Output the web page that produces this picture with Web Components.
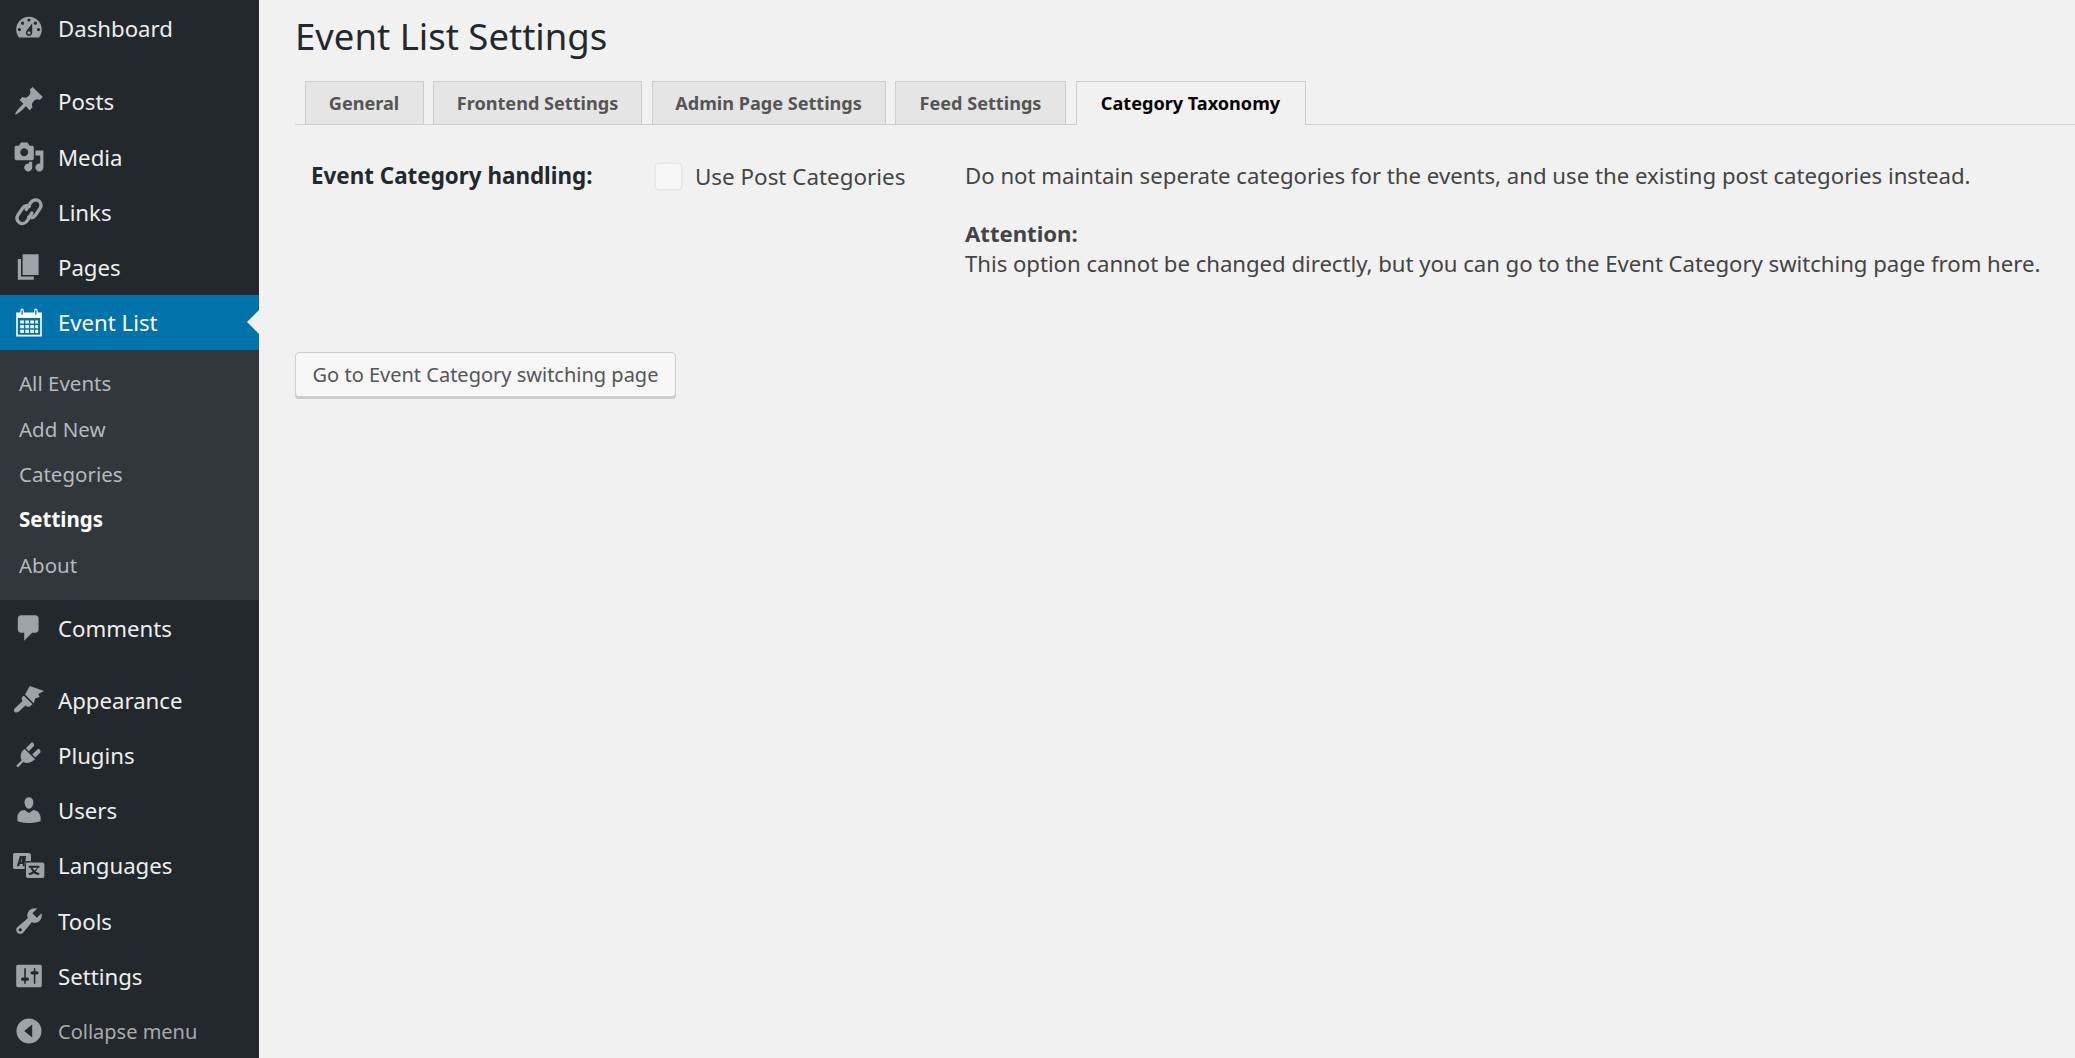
<!DOCTYPE html>
<html>
<head>
<meta charset="utf-8">
<title>Event List Settings</title>
<style>
  html, body { margin: 0; height: 100%; background: #f1f1f1; overflow: hidden; }
  body { font-family: "Noto Sans", "Open Sans", sans-serif; color: #444; }
  wp-shell { height: 1058px; }
</style>
</head>
<body>
<wp-shell>
  <wp-menu slot="menu">
    <wp-item icon="dashboard">Dashboard</wp-item>
    <wp-sep></wp-sep>
    <wp-item icon="pin">Posts</wp-item>
    <wp-item icon="media">Media</wp-item>
    <wp-item icon="link">Links</wp-item>
    <wp-item icon="pages">Pages</wp-item>
    <wp-item icon="calendar" current>Event List</wp-item>
    <wp-submenu>
      <wp-subitem>All Events</wp-subitem>
      <wp-subitem>Add New</wp-subitem>
      <wp-subitem>Categories</wp-subitem>
      <wp-subitem current>Settings</wp-subitem>
      <wp-subitem>About</wp-subitem>
    </wp-submenu>
    <wp-item icon="comment">Comments</wp-item>
    <wp-sep style="height:17.300px"></wp-sep>
    <wp-item icon="brush">Appearance</wp-item>
    <wp-item icon="plug">Plugins</wp-item>
    <wp-item icon="user">Users</wp-item>
    <wp-item icon="lang">Languages</wp-item>
    <wp-item icon="wrench">Tools</wp-item>
    <wp-item icon="sliders">Settings</wp-item>
    <wp-item icon="collapse" muted>Collapse menu</wp-item>
  </wp-menu>
  <h-title>Event List Settings</h-title>
  <wp-tabs>
    <wp-tab style="width:119px">General</wp-tab>
    <wp-tab style="width:209px">Frontend Settings</wp-tab>
    <wp-tab style="width:234px">Admin Page Settings</wp-tab>
    <wp-tab style="width:171px">Feed Settings</wp-tab>
    <wp-tab style="width:230px" active>Category Taxonomy</wp-tab>
  </wp-tabs>
  <wp-option label="Event Category handling:" check="Use Post Categories">
    <p>Do not maintain seperate categories for the events, and use the existing post categories instead.</p>
    <p><b>Attention:</b><br>This option cannot be changed directly, but you can go to the Event Category switching page from here.</p>
  </wp-option>
  <wp-button>Go to Event Category switching page</wp-button>
</wp-shell>
<script>
// ICON PATHS, ALL ON A 20x20 BOX
const ICONS = {
  dashboard: '<path fill-rule="evenodd" d="M3.760 16h12.480c1.100-1.370 1.760-3.110 1.760-5 0-4.420-3.580-8-8-8s-8 3.580-8 8c0 1.890.660 3.630 1.760 5zM10 4c.550 0 1 .450 1 1s-.450 1-1 1-1-.450-1-1 .450-1 1-1zM6 6c.550 0 1 .450 1 1s-.450 1-1 1-1-.450-1-1 .450-1 1-1zm8 0c.550 0 1 .450 1 1s-.450 1-1 1-1-.450-1-1 .450-1 1-1zm-5.370 5.550L12 7v6c0 1.100-.900 2-2 2s-2-.900-2-2c0-.570.240-1.080.630-1.450zM4 10c.550 0 1 .450 1 1s-.450 1-1 1-1-.450-1-1 .450-1 1-1zm12 0c.550 0 1 .450 1 1s-.450 1-1 1-1-.450-1-1 .450-1 1-1zm-5 3c0-.550-.450-1-1-1s-1 .450-1 1 .450 1 1 1 1-.450 1-1z"/>',
  pin: '<path d="M10.440 3.020l1.820-1.820 6.360 6.350-1.830 1.820c-1.050-.680-2.480-.570-3.410.360l-.750.750c-.920.930-1.040 2.350-.350 3.410l-1.830 1.820-2.410-2.410-2.800 2.790c-.420.420-3.380 2.710-3.800 2.290s1.860-3.390 2.280-3.810l2.790-2.790L4.100 9.360l1.830-1.820c1.050.690 2.480.570 3.400-.360l.750-.750c.930-.920 1.050-2.350.360-3.410z"/>',
  media: '<path fill-rule="evenodd" d="M13 11V4c0-.550-.450-1-1-1h-1.670L9 1H5L3.670 3H2c-.550 0-1 .450-1 1v7c0 .550.450 1 1 1h10c.550 0 1-.450 1-1zM7 4.500c1.380 0 2.500 1.120 2.500 2.500S8.380 9.500 7 9.500 4.500 8.380 4.500 7 5.620 4.500 7 4.500z"/><path d="M14 6h5v10.500c0 1.380-1.120 2.500-2.500 2.500S14 17.880 14 16.500s1.120-2.500 2.500-2.500c.170 0 .340.020.500.050V9h-3V6zm-4 8.050V13h2v3.500c0 1.380-1.120 2.500-2.500 2.500S7 17.880 7 16.500 8.120 14 9.500 14c.170 0 .340.020.500.050z"/>',
  link: '<g fill="none" stroke="currentColor" stroke-width="2.100" stroke-linecap="round"><path d="M8.200 8.400l2.700-4c1.200-1.800 3.300-2.500 5-1.500 1.800 1.100 2.100 3.200.9 5l-2.600 3.800c-1.100 1.600-2.900 2.100-4.400 1.400"/><path d="M11.800 10.600l-2.700 4.600c-1.200 1.800-3.300 2.500-5 1.500-1.800-1.100-2.100-3.200-.9-5l2.600-3.800c1.100-1.600 2.900-2.100 4.400-1.400"/></g>',
  pages: '<path d="M6 15V2h10v13H6zm-1 1h8v2H3V5h2v11z"/>',
  calendar: '<path fill-rule="evenodd" d="M2 4h2.600V3c0-.900.500-1.500 1.100-1.500S6.800 2.100 6.800 3v1h6.400V3c0-.900.500-1.500 1.100-1.500s1.100.600 1.100 1.500v1H18v15H2zM5.300 3v2.200c0 .300.200.500.400.500s.400-.200.400-.500V3c0-.300-.200-.500-.400-.500s-.400.200-.400.500zM13.900 3v2.200c0 .300.200.500.400.500s.400-.200.400-.500V3c0-.300-.200-.500-.400-.500s-.400.200-.400.500zM3 7.500V18h14V7.500zM4.500 9h2.300v2H4.500zM7.700 9h2.300v2H7.700zM10.800 9h2.300v2h-2.300zM13.900 9h1.800v2h-1.800zM4.500 11.900h2.300v2H4.500zM7.700 11.900h2.300v2H7.700zM10.800 11.900h2.300v2h-2.300zM13.900 11.900h1.800v2h-1.800zM4.500 14.800h2.300v2H4.500zM7.700 14.800h2.300v2H7.700zM10.800 14.800h2.300v2h-2.300zM13.900 14.800h1.800v2h-1.800z"/>',
  comment: '<path d="M5 2h9c1.100 0 2 .900 2 2v7c0 1.100-.900 2-2 2h-2l-5 5v-5H5c-1.100 0-2-.900-2-2V4c0-1.100.900-2 2-2z"/>',
  brush: '<path d="M10.500 1.200 19.400 4.400 15.800 6.200 16.600 8.200 13.800 9 13 12 7.500 6.500zM6.800 7.300 12.200 12.700 10.500 14C9.500 14.500 8.500 14 7.800 13.400L3.500 17.300C2.500 18 1 18 .7 16.800.500 16 1 15.300 1.700 14.700L6 10.700C5.300 9.800 5.200 8.800 5.800 8z"/>',
  plug: '<path d="M13.110 4.360 9.870 7.600 8 5.730l3.240-3.240c.350-.340 1.050-.340 1.540 0 .430.430.430 1.390.330 1.870zm4 4-3.240 3.240-1.870-1.870 3.240-3.240c.350-.340 1.050-.340 1.540 0 .430.430.430 1.390.330 1.870zM7.300 6.260l6.440 6.450c-1.100 1.100-2.170 1.640-3.470 2.040-1.280.390-2.700.290-3.800-.430l-3.420 3.420-1.050-1.060 3.420-3.420c-.720-1.100-.820-2.520-.430-3.800.400-1.300.940-2.370 2.310-3.200z"/>',
  user: '<path d="M10 9.250c-2.270 0-2.730-3.440-2.730-3.440C7 4.020 7.820 2 9.970 2c2.160 0 2.980 2.020 2.710 3.810 0 0-.410 3.440-2.680 3.440zm0 2.570L12.720 10c2.390 0 4.520 2.330 4.520 4.530v2.490s-3.650 1.130-7.240 1.130c-3.650 0-7.240-1.130-7.240-1.130v-2.490c0-2.250 1.940-4.480 4.470-4.480z"/>',
  lang: '<path fill-rule="evenodd" d="M1.200 2.500h8.600c.800 0 1.400.600 1.400 1.300v3.700H8.700c-.800 0-1.400.600-1.400 1.400v3.600H1.200c-.700 0-1.200-.500-1.200-1.200V3.700c0-.700.500-1.200 1.200-1.200zM4.300 4.300 2.400 10.800h1.500l.400-1.500h1.900l-.200 1.500h1.400l.800-6.500zM4.700 8l.900-2.300-.200 2.300z"/><path fill-rule="evenodd" d="M9 8.400h9.300c.800 0 1.300.500 1.300 1.300v7.100c0 .800-.500 1.300-1.300 1.300H9.500c-.800 0-1.400-.600-1.400-1.300V9.300c0-.500.400-.900.900-.900zM13.300 9.400v1.100h-3.400v1.200h1c.300 1 .800 1.800 1.400 2.400-.700.500-1.600.800-2.600 1l.400 1.200c1.200-.200 2.200-.600 3-1.200.900.600 1.900 1 3.100 1.200l.400-1.200c-1-.200-1.800-.500-2.500-1 .700-.600 1.100-1.400 1.400-2.400h1v-1.200h-3.300V9.400zM12.200 11.700h2.800c-.200.700-.600 1.200-1.400 1.700-.700-.500-1.100-1-1.400-1.700z"/>',
  wrench: '<path fill-rule="evenodd" d="M16.680 9.770c-1.340 1.340-3.300 1.670-4.950.990l-5.410 6.520c-.990.990-2.590.990-3.570 0-.990-.990-.990-2.590 0-3.570l6.520-5.420c-.680-1.650-.350-3.610.990-4.950 1.280-1.280 3.120-1.620 4.720-1.060l-2.890 2.890 2.820 2.820 2.860-2.870c.530 1.580.180 3.400-1.090 4.670zM3.810 16.210c.400.390 1.030.390 1.420 0 .400-.400.400-1.030 0-1.430-.390-.390-1.020-.390-1.420 0-.390.400-.390 1.030 0 1.430z"/>',
  sliders: '<path fill-rule="evenodd" d="M18 16V4c0-.550-.450-1-1-1H3c-.550 0-1 .450-1 1v12c0 .550.450 1 1 1h14c.550 0 1-.450 1-1zM8 11h1c.550 0 1 .450 1 1s-.450 1-1 1H8v1.500c0 .280-.220.500-.500.500S7 14.780 7 14.500V13H6c-.550 0-1-.450-1-1s.450-1 1-1h1V5.500c0-.280.220-.500.500-.500s.500.220.500.500V11zm5-2h-1c-.550 0-1-.450-1-1s.450-1 1-1h1V5.500c0-.280.220-.500.500-.500s.500.220.500.500V7h1c.550 0 1 .450 1 1s-.450 1-1 1h-1v5.500c0 .280-.220.500-.500.500s-.500-.220-.500-.500V9z"/>',
  collapse: '<path fill-rule="evenodd" d="M10 2.160c4.330 0 7.840 3.510 7.840 7.840s-3.510 7.840-7.840 7.840S2.160 14.330 2.160 10 5.670 2.160 10 2.160zM12 14V6l-5 4z"/>'
};

// SMALL HELPER: ONE CLASS PER TAG, MARKUP AND STYLE IN AN OPEN SHADOW ROOT
function define(tag, html, onConnect) {
  customElements.define(tag, class extends HTMLElement {
    connectedCallback() {
      if (this.shadowRoot) { return; }
      this.attachShadow({ mode: 'open' }).innerHTML = html;
      if (onConnect) { onConnect.call(this, this.shadowRoot); }
    }
  });
}

define('wp-shell', `
  <style>
    :host { display: grid; grid-template-columns: 259px 1fr; }
    main { padding: 0 0 0 36px; min-width: 0; }
  </style>
  <slot name="menu"></slot>
  <main><slot></slot></main>
`);

define('wp-menu', `
  <style>
    :host { display: block; box-sizing: border-box; padding-top: 1px; background: #23282d; height: 1058px; overflow: hidden; }
  </style>
  <slot></slot>
`);

define('wp-sep', `<style>:host { display: block; height: 18.200px; }</style>`);

define('wp-item', `
  <style>
    :host { display: flex; align-items: center; height: 55.150px; color: #eee; font-size: 22.200px; position: relative; }
    :host([current]) { background: #0073aa; color: #fff; }
    :host([current])::after {
      content: ""; position: absolute; right: 0; top: 50%; margin-top: -12.500px;
      border-style: solid; border-color: transparent #f1f1f1 transparent transparent; border-width: 12.500px 12px 12.500px 0;
    }
    :host([muted]) { color: #aaa; font-size: 20px; }
    svg { width: 32px; height: 32px; margin: -1px 13px 0; fill: #9ea3a8; color: #9ea3a8; flex: none; }
    :host([current]) svg { fill: #fff; color: #fff; }
  </style>
  <svg viewBox="0 0 20 20"></svg><slot></slot>
`, function (root) {
  root.querySelector('svg').innerHTML = ICONS[this.getAttribute('icon')];
});

define('wp-submenu', `
  <style>
    :host { display: block; background: #32373c; padding: 10.500px 0 13px; }
  </style>
  <slot></slot>
`);

define('wp-subitem', `
  <style>
    :host { display: flex; align-items: center; height: 45.400px; padding-left: 19px; color: #b4b9be; font-size: 20.500px; }
    :host([current]) { color: #fff; font-weight: 700; }
  </style>
  <slot></slot>
`);

define('h-title', `
  <style>
    :host { display: block; font-size: 36.500px; line-height: 47px; color: #23282d; padding-top: 13px; }
  </style>
  <slot></slot>
`);

define('wp-tabs', `
  <style>
    :host { display: flex; gap: 9.500px; padding: 21px 0 0 9.500px; border-bottom: 1px solid #ccc; height: 43px; }
  </style>
  <slot></slot>
`);

define('wp-tab', `
  <style>
    :host {
      display: flex; align-items: center; justify-content: center; box-sizing: border-box; height: 43px; padding-bottom: 1px;
      background: #e5e5e5; border: 1px solid #ccc; border-bottom: 0; color: #555; font-size: 18.100px; font-weight: 700;
    }
    :host([active]) { background: #f1f1f1; color: #000; height: 44px; padding-bottom: 2px; }
  </style>
  <slot></slot>
`);

define('wp-option', `
  <style>
    :host { display: flex; padding: 36px 0 0 16px; color: #444; font-size: 22.200px; line-height: 29.300px; }
    b.label { width: 343px; flex: none; color: #23282d; font-size: 22.400px; }
    .check { display: flex; align-items: center; gap: 14px; width: 310px; flex: none; height: 29px; margin-top: 1px; margin-left: 2px; margin-right: -2px; }
    .box { width: 25px; height: 25px; border-radius: 3px; background: #f6f6f6; box-shadow: 0 0 0 1.500px #e6e6e6; }
    .text { font-size: 22.400px; }
    .desc { white-space: nowrap; margin-left: 1px; }
    ::slotted(p) { margin: 0 0 29px; }
    ::slotted(p:last-child) { letter-spacing: -.040px; }
  </style>
  <b class="label"></b>
  <div class="check"><span class="box"></span><span class="text"></span></div>
  <div class="desc"><slot></slot></div>
`, function (root) {
  root.querySelector('.label').textContent = this.getAttribute('label');
  root.querySelector('.text').textContent = this.getAttribute('check');
});

define('wp-button', `
  <style>
    :host {
      display: inline-flex; align-items: center; justify-content: center; box-sizing: border-box; width: 381px; height: 45px; margin-top: 45px;
      background: #f7f7f7; border: 1px solid #ccc; border-radius: 4px; box-shadow: 0 2px 0 #ccc;
      color: #555; font-size: 20px;
    }
  </style>
  <slot></slot>
`);
</script>
</body>
</html>
